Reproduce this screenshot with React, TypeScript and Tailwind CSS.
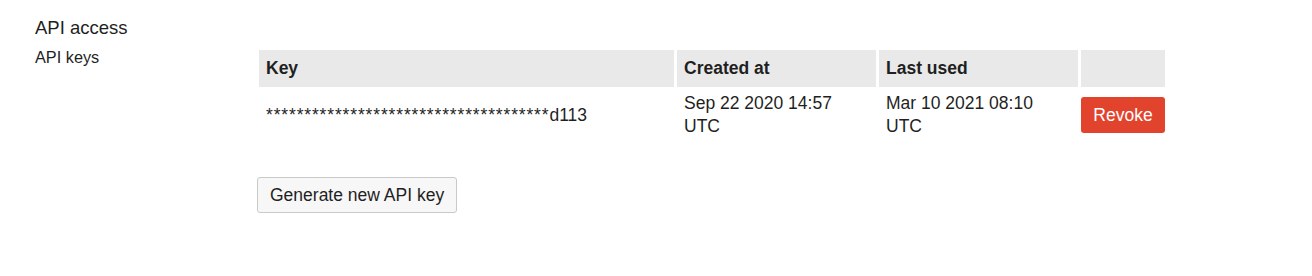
export default function App() {
  return (
    <div
      className="w-[1312px] h-[276px] bg-white text-[#1f1f1f] pl-[35px] pt-[16px]"
      style={{ fontFamily: '"Liberation Sans", Arial, Helvetica, sans-serif' }}
    >
      <h2 className="text-[18.5px] leading-[24px]">API access</h2>
      <div className="flex mt-[7px]">
        <div className="w-[224px] text-[16.3px] leading-[20px]">API keys</div>
        <div className="flex flex-col mt-[3px]">
          <div className="grid grid-cols-[415px_199px_199px_84px] gap-x-[3px] text-[17.5px]">
            <div className="bg-[#e9e9e9] h-[37px] flex items-center pl-[7px] font-bold">Key</div>
            <div className="bg-[#e9e9e9] h-[37px] flex items-center pl-[7px] font-bold">Created at</div>
            <div className="bg-[#e9e9e9] h-[37px] flex items-center pl-[7px] font-bold">Last used</div>
            <div className="bg-[#e9e9e9] h-[37px]"></div>
            <div className="h-[56px] flex items-center pl-[7px]">
              <span className="tracking-[0.85px]">*************************************</span>
              <span>d113</span>
            </div>
            <div className="h-[56px] flex items-center pl-[7px] leading-[23px]">
              <div>
                Sep 22 2020 14:57
                <br />
                UTC
              </div>
            </div>
            <div className="h-[56px] flex items-center pl-[7px] leading-[23px]">
              <div>
                Mar 10 2021 08:10
                <br />
                UTC
              </div>
            </div>
            <div className="h-[56px] flex items-center">
              <button className="w-[84px] h-[36px] bg-[#e2432d] text-white rounded-[3px] text-[17.5px]">
                Revoke
              </button>
            </div>
          </div>
          <div className="mt-[34px] -ml-[2px]">
            <button className="h-[36px] px-[12px] bg-[#f7f7f7] border border-[#c9c9c9] rounded-[3px] text-[17.5px] text-[#1f1f1f]">
              Generate new API key
            </button>
          </div>
        </div>
      </div>
    </div>
  );
}
